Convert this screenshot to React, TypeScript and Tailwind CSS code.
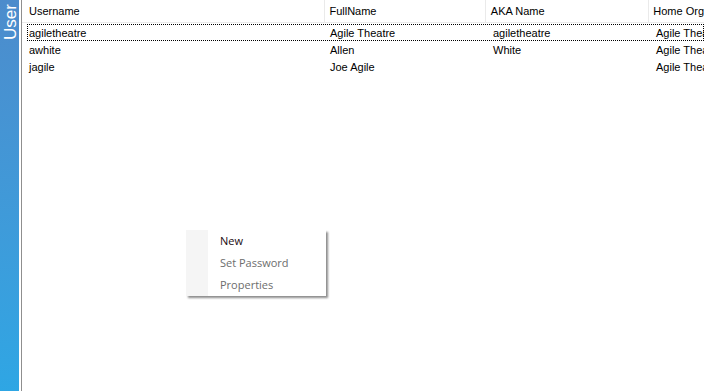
import React from "react";

const rows = [
  { u: "agiletheatre", f: "Agile Theatre", a: "agiletheatre", h: "Agile Theatre", focus: true },
  { u: "awhite", f: "Allen", a: "White", h: "Agile Theatre" },
  { u: "jagile", f: "Joe Agile", a: "", h: "Agile Theatre" },
];

export default function App() {
  return (
    <div
      className="relative flex h-[391px] w-[704px] overflow-hidden bg-white text-[11px] text-black"
      style={{ fontFamily: '"Liberation Sans", Arial, sans-serif' }}
    >
      <div className="flex w-[19px] shrink-0 justify-center bg-gradient-to-b from-[#4c8ccc] to-[#2ea6e4]">
        <div className="mt-[2px] h-[40px] w-[19px] relative">
          <span className="absolute left-1/2 top-1/2 -translate-x-1/2 -translate-y-1/2 -rotate-90 text-[17px] leading-none text-white">
            User
          </span>
        </div>
      </div>
      <div className="w-[2px] shrink-0 bg-white" />
      <div className="w-[1px] shrink-0 bg-[#8f8f8f]" />
      <div className="flex-1 min-w-0 overflow-hidden">
        <div className="flex h-[23px] items-center border-b border-[#ebebeb] bg-white">
          <div className="w-[302px] shrink-0 pl-[7px]">Username</div>
          <div className="h-full w-px bg-[#eaeaea]" />
          <div className="w-[161px] shrink-0 pl-[5px]">FullName</div>
          <div className="h-full w-px bg-[#eaeaea]" />
          <div className="w-[162px] shrink-0 pl-[5px]">AKA Name</div>
          <div className="h-full w-px bg-[#eaeaea]" />
          <div className="flex-1 whitespace-nowrap pl-[5px]">Home Org</div>
        </div>
        <div className="mt-[1px]">
          {rows.map((r, i) => (
            <div
              key={i}
              className={
                "ml-[5px] flex h-[17px] items-center whitespace-nowrap pt-[1px] " +
                (r.focus ? "border border-dotted border-black" : "border border-transparent")
              }
            >
              <div className="w-[302px] shrink-0 pl-[1px]">{r.u}</div>
              <div className="w-[163px] shrink-0">{r.f}</div>
              <div className="w-[163px] shrink-0">{r.a}</div>
              <div className="flex-1">{r.h}</div>
            </div>
          ))}
        </div>
      </div>

      <div
        className="absolute left-[186px] top-[230px] flex h-[66px] w-[140px] bg-white shadow-[2px_2px_2px_rgba(0,0,0,0.45)]"
        style={{ fontFamily: '"Open Sans", "Noto Sans", sans-serif' }}
      >
        <div className="w-[22px] bg-[#f5f5f5]" />
        <div className="flex flex-col pl-[12px] pt-0 text-[11px]">
          <div className="h-[22px] leading-[22px] text-[#1a0a10]">New</div>
          <div className="h-[22px] leading-[22px] text-[#6d6d6d]">Set Password</div>
          <div className="h-[22px] leading-[22px] text-[#6d6d6d]">Properties</div>
        </div>
      </div>
    </div>
  );
}
